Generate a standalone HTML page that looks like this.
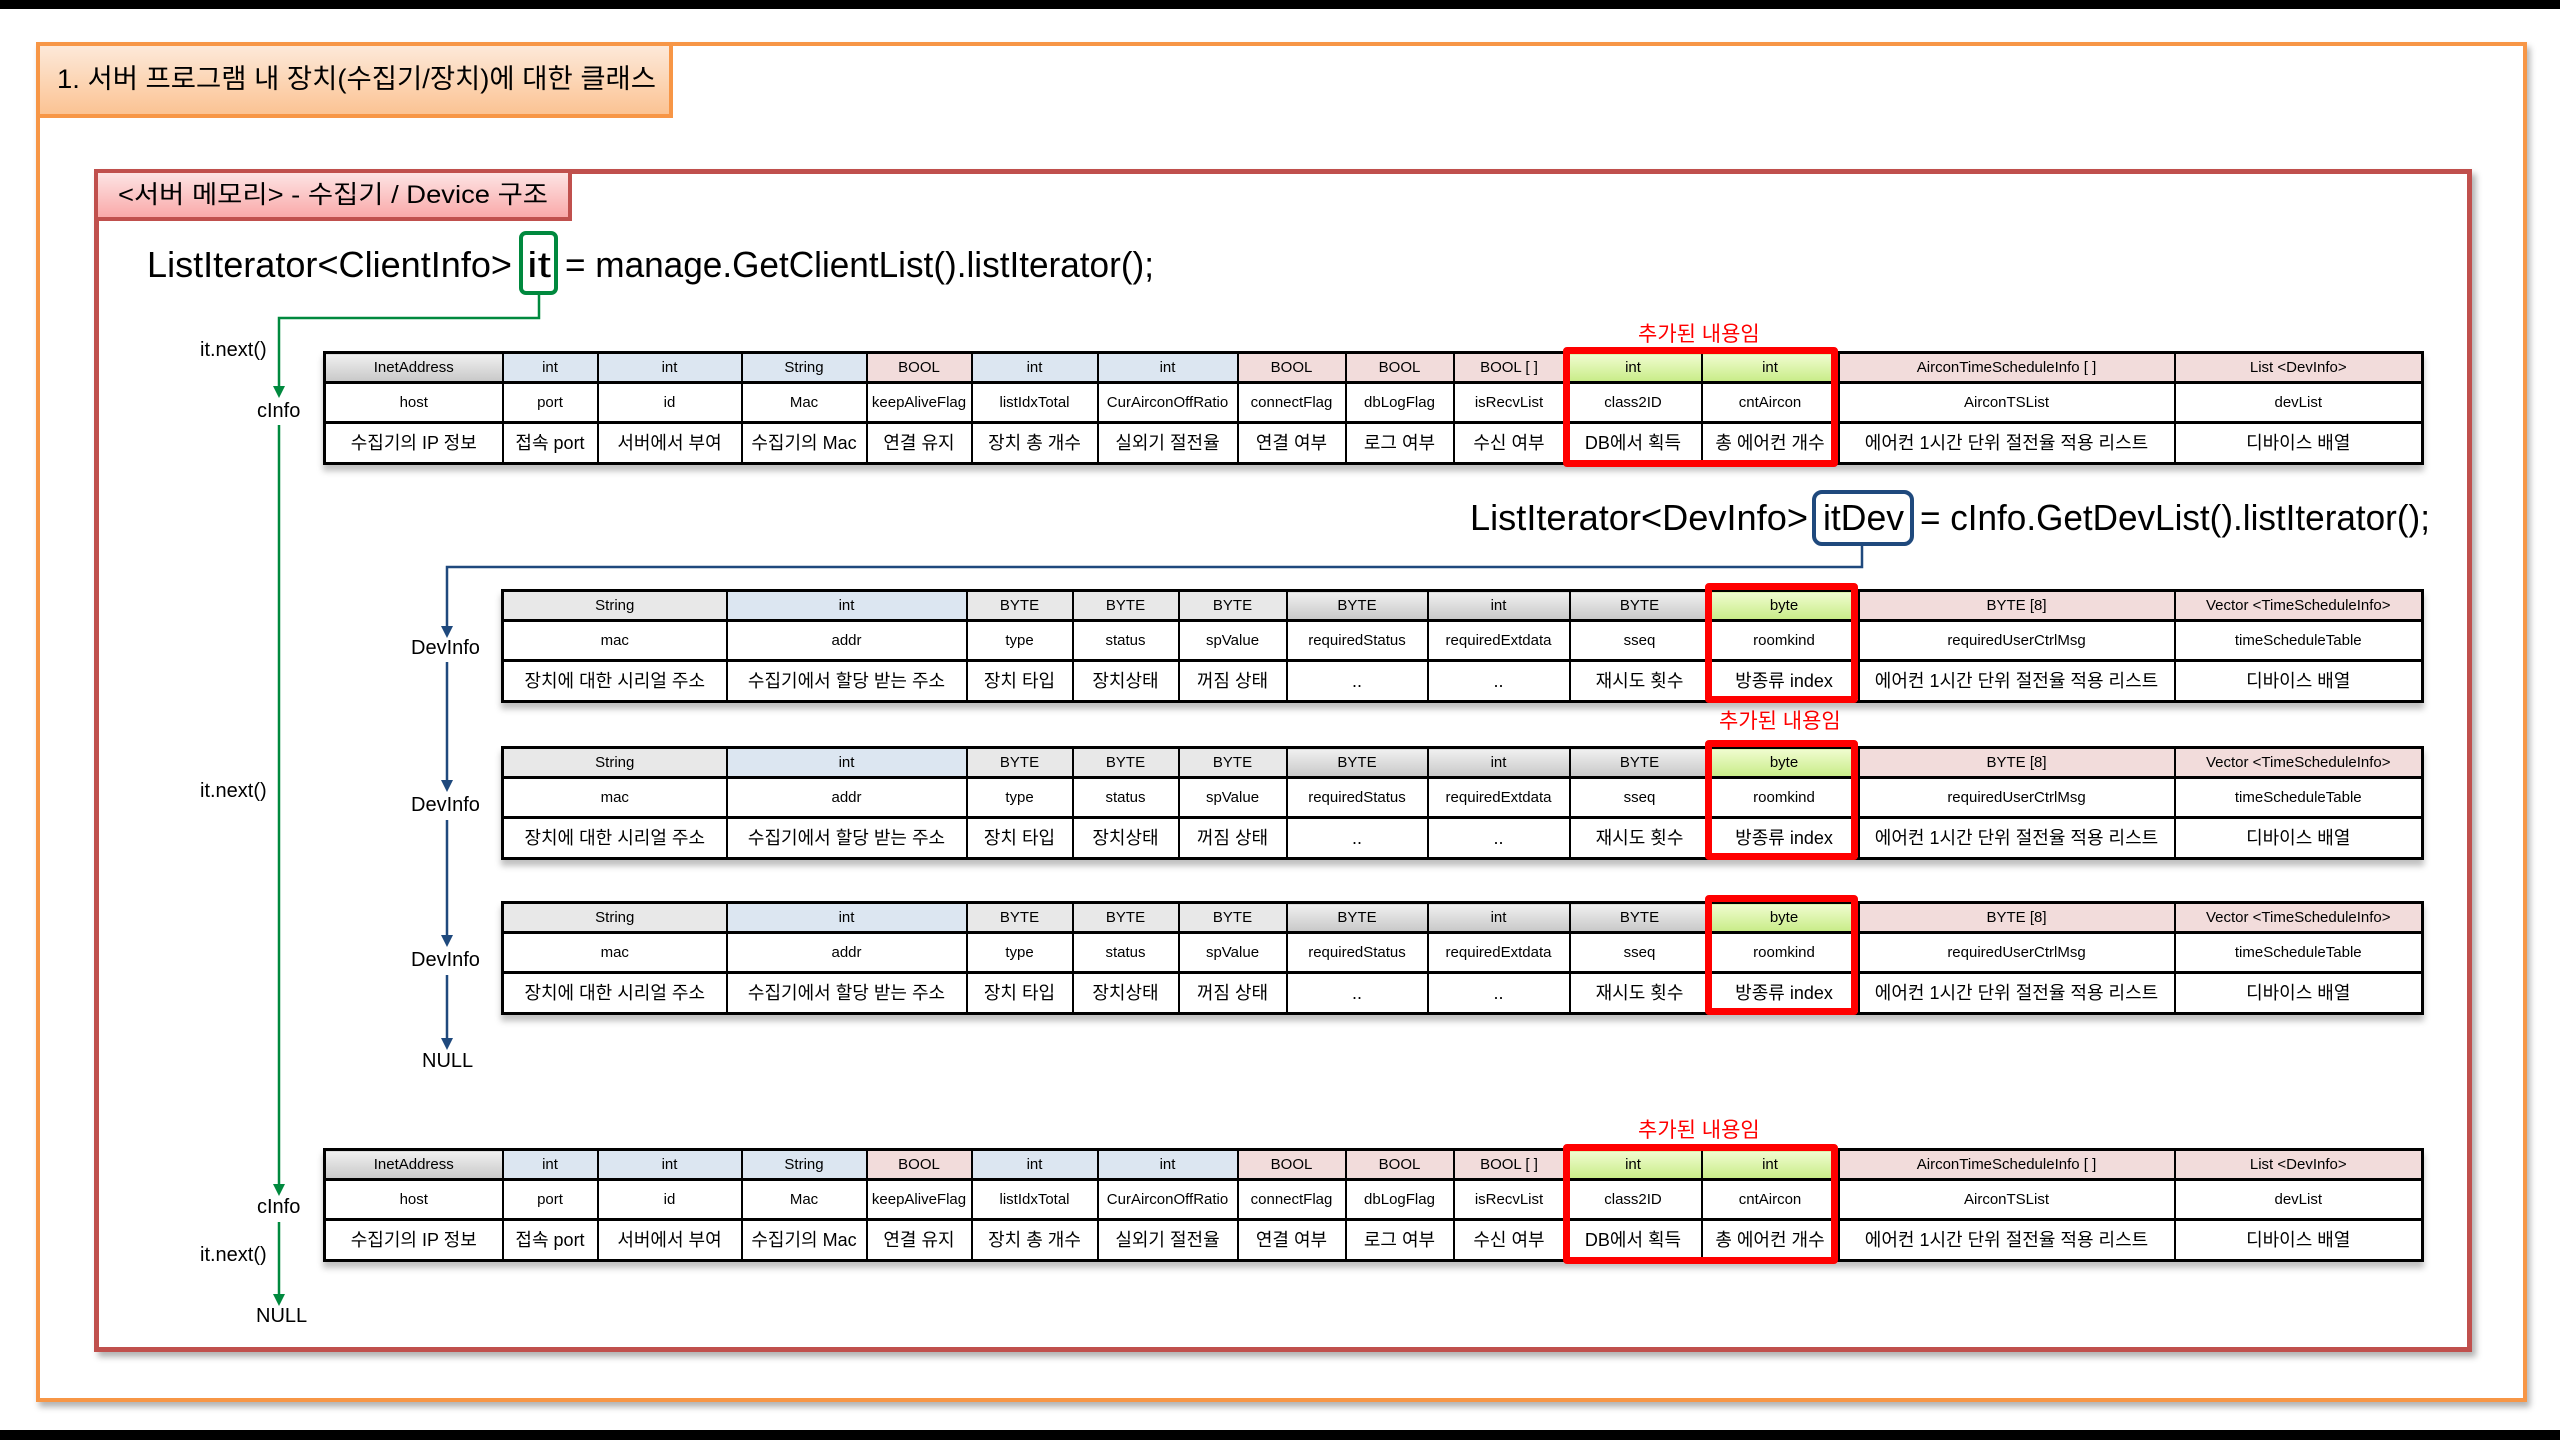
<!DOCTYPE html>
<html><head><meta charset="utf-8">
<style>
html,body{margin:0;padding:0;}
body{width:2560px;height:1440px;position:relative;background:#fff;overflow:hidden;font-family:"Liberation Sans","Noto Sans CJK KR",sans-serif;color:#000;}
.abs{position:absolute;}
table{position:absolute;border-collapse:collapse;table-layout:fixed;border:3px solid #000;box-shadow:0 6px 6px rgba(0,0,0,0.25);background:#fff;}
td{border:2px solid #000;text-align:center;padding:0;overflow:hidden;white-space:nowrap;line-height:1;}
tr.h td{font-size:15px;height:27px;border-bottom-width:3px;}
tr.n td{font-size:15px;height:37px;}
tr.k td{font-size:18px;height:38px;border-top-width:3px;}
.g{background:linear-gradient(#f0f0f0,#c8c8c8);}
.lg{background:#e8e8e8;}
.b{background:#dce6f1;}
.p{background:#f2dcdb;}
.gr{background:linear-gradient(#f0fcd0,#c8ec88);}
.rb{position:absolute;border:7px solid #f00;border-radius:4px;box-sizing:border-box;}
.lbl{position:absolute;font-size:20px;line-height:20px;}
.add{position:absolute;font-size:21px;color:#f00;}
</style></head><body>
<div class="abs" style="left:0;top:0;width:2560px;height:9px;background:#000"></div>
<div class="abs" style="left:0;top:1430px;width:2560px;height:10px;background:#000"></div>

<div class="abs" style="left:36px;top:42px;width:2483px;height:1352px;border:4px solid #f79646;box-shadow:3px 5px 6px rgba(0,0,0,0.3);"></div>
<div class="abs" style="left:36px;top:42px;width:629px;height:68px;border:4px solid #f79646;background:linear-gradient(#fde9d9,#fbc393);"></div>
<div class="abs" style="left:94px;top:169px;width:2368px;height:1173px;border:5px solid #c0504d;box-shadow:4px 5px 6px rgba(0,0,0,0.3);"></div>
<div class="abs" style="left:94px;top:169px;width:470px;height:44px;border:4px solid #c0504d;background:linear-gradient(#fde4e4,#f9a9a9);"></div>

<svg class="abs" style="left:0;top:0" width="2560" height="1440">
<g font-family="Liberation Sans, Noto Sans CJK KR, sans-serif">
<text x="57" y="88" font-size="27" textLength="599" lengthAdjust="spacingAndGlyphs">1. 서버 프로그램 내 장치(수집기/장치)에 대한 클래스</text>
<text x="118" y="203" font-size="25" textLength="430" lengthAdjust="spacingAndGlyphs">&lt;서버 메모리&gt; - 수집기 / Device 구조</text>
<text x="147" y="277" font-size="36" textLength="365" lengthAdjust="spacingAndGlyphs">ListIterator&lt;ClientInfo&gt;</text>
<text x="527" y="277" font-size="36" textLength="24" lengthAdjust="spacingAndGlyphs">it</text>
<text x="565" y="277" font-size="36" textLength="589" lengthAdjust="spacingAndGlyphs">= manage.GetClientList().listIterator();</text>
<text x="1470" y="530" font-size="36" textLength="338" lengthAdjust="spacingAndGlyphs">ListIterator&lt;DevInfo&gt;</text>
<text x="1823" y="530" font-size="36" textLength="81" lengthAdjust="spacingAndGlyphs">itDev</text>
<text x="1920" y="530" font-size="36" textLength="510" lengthAdjust="spacingAndGlyphs">= cInfo.GetDevList().listIterator();</text>
</g>
<rect x="521" y="233" width="35" height="60" rx="5" fill="none" stroke="#00893e" stroke-width="4"/>
<rect x="1814" y="492" width="98" height="52" rx="8" fill="none" stroke="#1f497d" stroke-width="4"/>
<g stroke="#00893e" stroke-width="2.5" fill="none">
<polyline points="539,294 539,318 279,318 279,388"/>
<line x1="279" y1="425" x2="279" y2="1186"/>
<line x1="279" y1="1222" x2="279" y2="1296"/>
</g>
<g fill="#00893e">
<polygon points="273,386 285,386 279,398"/>
<polygon points="273,1184 285,1184 279,1196"/>
<polygon points="273,1294 285,1294 279,1306"/>
</g>
<g stroke="#1f497d" stroke-width="2.5" fill="none">
<polyline points="1862,545 1862,567 447,567 447,628"/>
<line x1="447" y1="662" x2="447" y2="782"/>
<line x1="447" y1="820" x2="447" y2="937"/>
<line x1="447" y1="975" x2="447" y2="1040"/>
</g>
<g fill="#1f497d">
<polygon points="441,626 453,626 447,638"/>
<polygon points="441,780 453,780 447,792"/>
<polygon points="441,935 453,935 447,947"/>
<polygon points="441,1038 453,1038 447,1050"/>
</g>
</svg>

<div class="lbl" style="left:200px;top:340px">it.next()</div>
<div class="lbl" style="left:257px;top:401px">cInfo</div>
<div class="lbl" style="left:200px;top:781px">it.next()</div>
<div class="lbl" style="left:257px;top:1197px">cInfo</div>
<div class="lbl" style="left:200px;top:1245px">it.next()</div>
<div class="lbl" style="left:256px;top:1306px">NULL</div>
<div class="lbl" style="left:411px;top:638px">DevInfo</div>
<div class="lbl" style="left:411px;top:795px">DevInfo</div>
<div class="lbl" style="left:411px;top:950px">DevInfo</div>
<div class="lbl" style="left:422px;top:1051px">NULL</div>

<div class="add" style="left:1638px;top:318px">추가된 내용임</div>
<div class="add" style="left:1719px;top:705px">추가된 내용임</div>
<div class="add" style="left:1638px;top:1114px">추가된 내용임</div>

<table style="left:323px;top:351px;width:2098px">
<colgroup><col style="width:178px"><col style="width:95px"><col style="width:144px"><col style="width:125px"><col style="width:105px"><col style="width:126px"><col style="width:140px"><col style="width:108px"><col style="width:108px"><col style="width:111px"><col style="width:137px"><col style="width:137px"><col style="width:336px"><col style="width:248px"></colgroup>
<tr class="h"><td class="g">InetAddress</td><td class="b">int</td><td class="b">int</td><td class="b">String</td><td class="p">BOOL</td><td class="b">int</td><td class="b">int</td><td class="p">BOOL</td><td class="p">BOOL</td><td class="p">BOOL [ ]</td><td class="gr">int</td><td class="gr">int</td><td class="p">AirconTimeScheduleInfo [ ]</td><td class="p">List &lt;DevInfo&gt;</td></tr>
<tr class="n"><td>host</td><td>port</td><td>id</td><td>Mac</td><td>keepAliveFlag</td><td>listIdxTotal</td><td>CurAirconOffRatio</td><td>connectFlag</td><td>dbLogFlag</td><td>isRecvList</td><td>class2ID</td><td>cntAircon</td><td>AirconTSList</td><td>devList</td></tr>
<tr class="k"><td>수집기의 IP 정보</td><td>접속 port</td><td>서버에서 부여</td><td>수집기의 Mac</td><td>연결 유지</td><td>장치 총 개수</td><td>실외기 절전율</td><td>연결 여부</td><td>로그 여부</td><td>수신 여부</td><td>DB에서 획득</td><td>총 에어컨 개수</td><td>에어컨 1시간 단위 절전율 적용 리스트</td><td>디바이스 배열</td></tr>
</table>
<div class="rb" style="left:1563px;top:347px;width:275px;height:120px"></div>

<table style="left:501px;top:589px;width:1920px">
<colgroup><col style="width:224px"><col style="width:240px"><col style="width:106px"><col style="width:106px"><col style="width:108px"><col style="width:141px"><col style="width:142px"><col style="width:140px"><col style="width:149px"><col style="width:316px"><col style="width:248px"></colgroup>
<tr class="h"><td class="lg">String</td><td class="b">int</td><td class="lg">BYTE</td><td class="lg">BYTE</td><td class="lg">BYTE</td><td class="g">BYTE</td><td class="g">int</td><td class="g">BYTE</td><td class="gr">byte</td><td class="p">BYTE [8]</td><td class="p">Vector &lt;TimeScheduleInfo&gt;</td></tr>
<tr class="n"><td>mac</td><td>addr</td><td>type</td><td>status</td><td>spValue</td><td>requiredStatus</td><td>requiredExtdata</td><td>sseq</td><td>roomkind</td><td>requiredUserCtrlMsg</td><td>timeScheduleTable</td></tr>
<tr class="k"><td>장치에 대한 시리얼 주소</td><td>수집기에서 할당 받는 주소</td><td>장치 타입</td><td>장치상태</td><td>꺼짐 상태</td><td>..</td><td>..</td><td>재시도 횟수</td><td>방종류 index</td><td>에어컨 1시간 단위 절전율 적용 리스트</td><td>디바이스 배열</td></tr>
</table>
<div class="rb" style="left:1705px;top:583px;width:153px;height:120px"></div>

<table style="left:501px;top:746px;width:1920px">
<colgroup><col style="width:224px"><col style="width:240px"><col style="width:106px"><col style="width:106px"><col style="width:108px"><col style="width:141px"><col style="width:142px"><col style="width:140px"><col style="width:149px"><col style="width:316px"><col style="width:248px"></colgroup>
<tr class="h"><td class="lg">String</td><td class="b">int</td><td class="lg">BYTE</td><td class="lg">BYTE</td><td class="lg">BYTE</td><td class="g">BYTE</td><td class="g">int</td><td class="g">BYTE</td><td class="gr">byte</td><td class="p">BYTE [8]</td><td class="p">Vector &lt;TimeScheduleInfo&gt;</td></tr>
<tr class="n"><td>mac</td><td>addr</td><td>type</td><td>status</td><td>spValue</td><td>requiredStatus</td><td>requiredExtdata</td><td>sseq</td><td>roomkind</td><td>requiredUserCtrlMsg</td><td>timeScheduleTable</td></tr>
<tr class="k"><td>장치에 대한 시리얼 주소</td><td>수집기에서 할당 받는 주소</td><td>장치 타입</td><td>장치상태</td><td>꺼짐 상태</td><td>..</td><td>..</td><td>재시도 횟수</td><td>방종류 index</td><td>에어컨 1시간 단위 절전율 적용 리스트</td><td>디바이스 배열</td></tr>
</table>
<div class="rb" style="left:1705px;top:740px;width:153px;height:120px"></div>

<table style="left:501px;top:901px;width:1920px">
<colgroup><col style="width:224px"><col style="width:240px"><col style="width:106px"><col style="width:106px"><col style="width:108px"><col style="width:141px"><col style="width:142px"><col style="width:140px"><col style="width:149px"><col style="width:316px"><col style="width:248px"></colgroup>
<tr class="h"><td class="lg">String</td><td class="b">int</td><td class="lg">BYTE</td><td class="lg">BYTE</td><td class="lg">BYTE</td><td class="g">BYTE</td><td class="g">int</td><td class="g">BYTE</td><td class="gr">byte</td><td class="p">BYTE [8]</td><td class="p">Vector &lt;TimeScheduleInfo&gt;</td></tr>
<tr class="n"><td>mac</td><td>addr</td><td>type</td><td>status</td><td>spValue</td><td>requiredStatus</td><td>requiredExtdata</td><td>sseq</td><td>roomkind</td><td>requiredUserCtrlMsg</td><td>timeScheduleTable</td></tr>
<tr class="k"><td>장치에 대한 시리얼 주소</td><td>수집기에서 할당 받는 주소</td><td>장치 타입</td><td>장치상태</td><td>꺼짐 상태</td><td>..</td><td>..</td><td>재시도 횟수</td><td>방종류 index</td><td>에어컨 1시간 단위 절전율 적용 리스트</td><td>디바이스 배열</td></tr>
</table>
<div class="rb" style="left:1705px;top:895px;width:153px;height:120px"></div>

<table style="left:323px;top:1148px;width:2098px">
<colgroup><col style="width:178px"><col style="width:95px"><col style="width:144px"><col style="width:125px"><col style="width:105px"><col style="width:126px"><col style="width:140px"><col style="width:108px"><col style="width:108px"><col style="width:111px"><col style="width:137px"><col style="width:137px"><col style="width:336px"><col style="width:248px"></colgroup>
<tr class="h"><td class="g">InetAddress</td><td class="b">int</td><td class="b">int</td><td class="b">String</td><td class="p">BOOL</td><td class="b">int</td><td class="b">int</td><td class="p">BOOL</td><td class="p">BOOL</td><td class="p">BOOL [ ]</td><td class="gr">int</td><td class="gr">int</td><td class="p">AirconTimeScheduleInfo [ ]</td><td class="p">List &lt;DevInfo&gt;</td></tr>
<tr class="n"><td>host</td><td>port</td><td>id</td><td>Mac</td><td>keepAliveFlag</td><td>listIdxTotal</td><td>CurAirconOffRatio</td><td>connectFlag</td><td>dbLogFlag</td><td>isRecvList</td><td>class2ID</td><td>cntAircon</td><td>AirconTSList</td><td>devList</td></tr>
<tr class="k"><td>수집기의 IP 정보</td><td>접속 port</td><td>서버에서 부여</td><td>수집기의 Mac</td><td>연결 유지</td><td>장치 총 개수</td><td>실외기 절전율</td><td>연결 여부</td><td>로그 여부</td><td>수신 여부</td><td>DB에서 획득</td><td>총 에어컨 개수</td><td>에어컨 1시간 단위 절전율 적용 리스트</td><td>디바이스 배열</td></tr>
</table>
<div class="rb" style="left:1563px;top:1144px;width:275px;height:120px"></div>

</body></html>
